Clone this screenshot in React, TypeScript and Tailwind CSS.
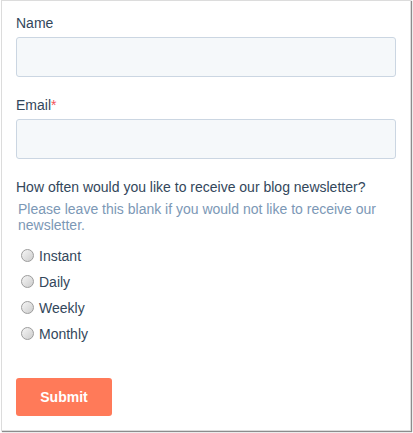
import React from 'react';

const options = ['Instant', 'Daily', 'Weekly', 'Monthly'];

const Radio: React.FC<{ label: string }> = ({ label }) => (
  <label className="flex h-[26px] items-center">
    <span className="ml-[5px] mr-[5px] mb-[2px] h-[13px] w-[13px] rounded-full border border-[#9c9c9c] bg-gradient-to-br from-[#f6f6f6] to-[#cdcdcd]" />
    <span className="text-[14px] leading-[20px] text-[#33475b]">{label}</span>
  </label>
);

const App: React.FC = () => {
  return (
    <div className="w-[413px] h-[433px] bg-white pl-[1px]" style={{ fontFamily: '"Liberation Sans", Arial, sans-serif' }}>
      <div className="h-[431px] w-[410px] border border-[#dcdcdc] bg-white px-[14px] pt-[12px] shadow-[1px_1px_1px_rgba(0,0,0,0.45)]">
        <div>
          <div className="text-[14px] leading-[20px] text-[#33475b]">Name</div>
          <input
            type="text"
            className="mt-[4px] block h-[40px] w-full rounded-[3px] border border-[#cbd6e2] bg-[#f5f8fa] outline-none"
          />
        </div>

        <div className="mt-[18px]">
          <div className="text-[14px] leading-[20px] text-[#33475b]">
            Email<span className="text-[#f2545b]">*</span>
          </div>
          <input
            type="email"
            className="mt-[4px] block h-[40px] w-full rounded-[3px] border border-[#cbd6e2] bg-[#f5f8fa] outline-none"
          />
        </div>

        <div className="mt-[18px]">
          <div className="text-[14px] leading-[20px] text-[#33475b]">
            How often would you like to receive our blog newsletter?
          </div>
          <p className="mt-[4px] pl-[2px] text-[14px] leading-[16px] text-[#7c98b6]">
            Please leave this blank if you would not like to receive our newsletter.
          </p>
          <div className="mt-[10px]">
            {options.map((o) => (
              <Radio key={o} label={o} />
            ))}
          </div>
        </div>

        <button className="mt-[31px] h-[38px] w-[96px] rounded-[3px] bg-[#ff7a59] text-[14px] font-bold text-white">
          Submit
        </button>
      </div>
    </div>
  );
};

export default App;
